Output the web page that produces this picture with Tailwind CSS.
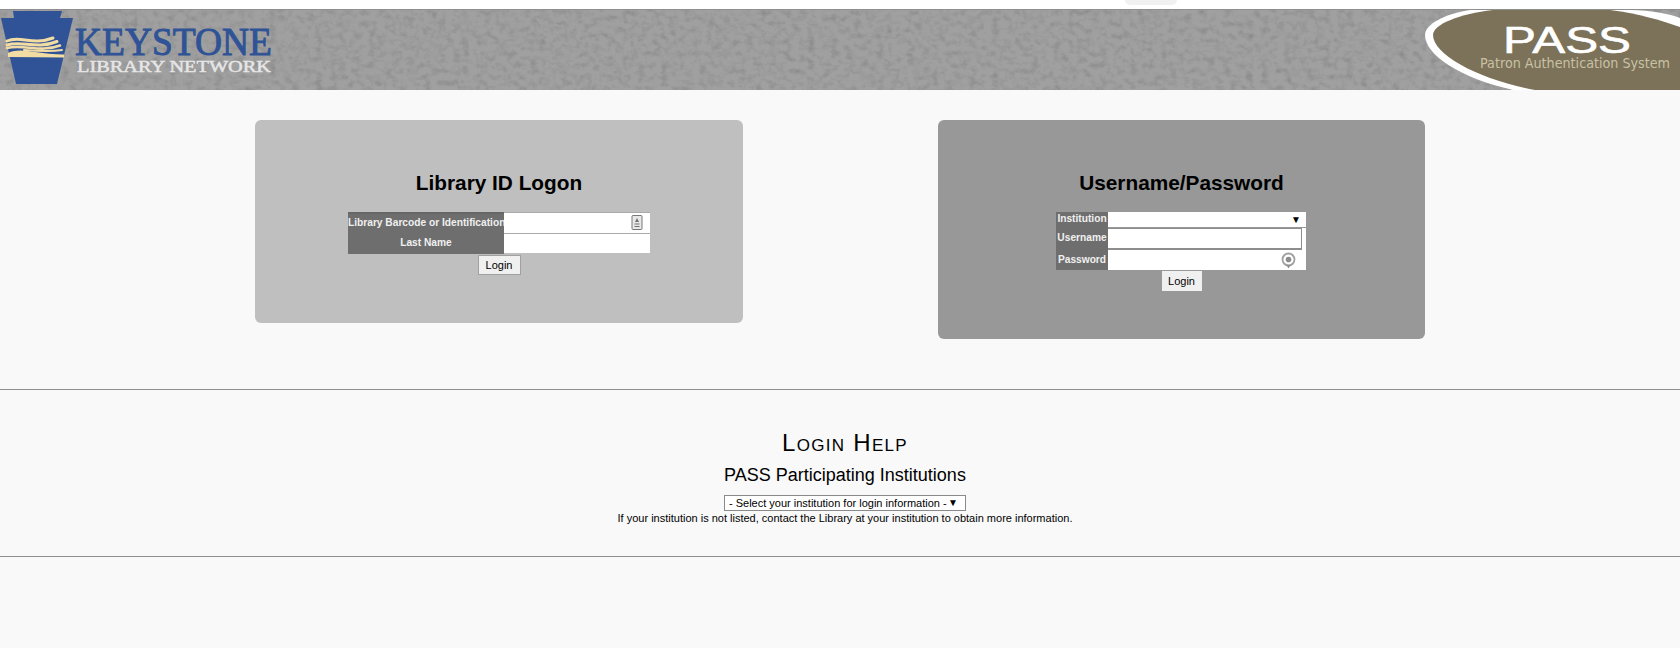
<!DOCTYPE html>
<html lang="en">
<head>
<meta charset="utf-8">
<title>PASS Login</title>
<script src="https://cdn.jsdelivr.net/npm/@tailwindcss/browser@4"></script>
</head>
<body class="bg-[#f9f9f9] font-['Liberation_Sans',Arial,sans-serif] text-black h-[648px] overflow-hidden relative">
<div class="absolute left-[1125px] top-0 w-[52px] h-[5px] bg-[#f1f1f1] rounded-b-[10px]"></div>
<div class="h-[9px] bg-white"></div>
<header class="relative h-[81px] bg-[#a0a0a0] border-t border-[#8f8f8f] flex justify-between overflow-hidden">
  <svg class="absolute inset-0 w-full h-full" aria-hidden="true">
    <filter id="concrete" x="0" y="0" width="100%" height="100%">
      <feTurbulence type="fractalNoise" baseFrequency="0.13 0.17" numOctaves="5" seed="23"/>
      <feColorMatrix type="matrix" values="0 0 0 0 0  0 0 0 0 0  0 0 0 0 0  1.1 1.1 0 0 -0.98"/>
    </filter>
    <rect width="100%" height="100%" filter="url(#concrete)" opacity="0.15"/>
  </svg>
  <svg class="relative w-[290px] h-[80px] shrink-0" viewBox="0 10 290 80" aria-label="Keystone Library Network logo">
    <polygon points="13,11 62,11 60,18 73,18 57,84 16,84 1,18 14,18" fill="#2f5396"/>
    <g fill="none" stroke="#f2dca4" stroke-linecap="round">
      <path d="M7 41 C 20 35 32 46 53 38" stroke-width="3"/>
      <path d="M7 45 C 22 40 36 50 57 41.5" stroke-width="3"/>
      <path d="M7 48 C 24 44 40 53 60 45.5" stroke-width="2.6"/>
      <path d="M24 50 C 36 51 50 52 62 50" stroke-width="2"/>
    </g>
    <path d="M8 53 C 22 47 32 54 64 54.5 L 64 57.5 L 8 57 Z" fill="#f2dca4"/>
    <text x="75" y="55" font-family="Liberation Serif" font-size="40" fill="#2f5396" stroke="#2f5396" stroke-width="1" textLength="197" lengthAdjust="spacingAndGlyphs">KEYSTONE</text>
    <text x="77" y="72" font-family="Liberation Serif" font-size="17.5" fill="#e6e6e6" stroke="#e6e6e6" stroke-width="0.5" textLength="194" lengthAdjust="spacingAndGlyphs">LIBRARY NETWORK</text>
  </svg>
  <svg class="relative w-[260px] h-[80px] shrink-0" viewBox="1420 10 260 80" aria-label="PASS Patron Authentication System logo">
    <path d="M1470 10 C1445 14 1425 24 1425 35 C1425 55 1460 78 1513 90 L1680 90 L1680 18 C1670 14 1650 10 1630 10 Z" fill="#fff"/>
    <path d="M1493 10 C1460 14 1433 24 1433 35 C1433 55 1480 80 1535 90 L1680 90 L1680 27 C1660 20 1640 14 1610 10 Z" fill="#7b7259"/>
    <text x="1503" y="53" font-family="Liberation Sans" font-size="37" fill="#fff" stroke="#fff" stroke-width="0.6" textLength="128" lengthAdjust="spacingAndGlyphs">PASS</text>
    <text x="1480" y="68" font-family="DejaVu Sans" font-size="13.5" fill="#c9c1a4" textLength="190" lengthAdjust="spacingAndGlyphs">Patron Authentication System</text>
  </svg>
</header>

<main class="flex justify-center items-start gap-[195px] pt-[30px]">
  <section class="w-[488px] h-[203px] bg-[#bfbfbf] rounded-[6px] pt-[50px] flex flex-col items-center">
    <h2 class="text-[20.8px] leading-[26px] font-bold">Library ID Logon</h2>
    <div class="mt-[16px] grid grid-cols-[156px_146px] text-[10.2px] font-bold text-[#f0f0f0]">
      <label class="bg-[#6e6e6e] h-[21px] leading-[18px] text-center border-t-2 border-[#666] whitespace-nowrap">Library Barcode or Identification</label>
      <div class="relative h-[21px] bg-white border-t border-[#aaa] pr-[1px] flex">
        <input class="w-full h-[19px] bg-white outline-none" type="text" aria-label="Library Barcode or Identification">
        <svg class="absolute right-[7px] top-[2px] w-[12px] h-[15px]" viewBox="0 0 12 15" aria-hidden="true"><rect x="1" y="0.5" width="10" height="14" rx="1" fill="#e8e8e8" stroke="#777"/><path d="M6 3 L8 7 H4 Z M3.5 8.5 H8.5 V9.5 H3.5 Z M3.5 11 H8.5 V12 H3.5 Z" fill="#707070"/></svg>
      </div>
      <label class="bg-[#6e6e6e] h-[21px] leading-[19px] text-center">Last Name</label>
      <input class="h-[20px] bg-white border-t border-[#aaa] outline-none" type="text" aria-label="Last Name">
    </div>
    <button class="mt-[1px] w-[43px] h-[20px] bg-[#f0f0f0] border border-[#a0a0a0] text-[11px] leading-[18px] text-black">Login</button>
  </section>

  <section class="w-[487px] h-[219px] bg-[#989898] rounded-[6px] pt-[50px] flex flex-col items-center">
    <h2 class="text-[20.8px] leading-[26px] font-bold">Username/Password</h2>
    <div class="mt-[16px] ml-[-1px] grid grid-cols-[52px_198px] text-[10.2px] font-bold text-[#f0f0f0]">
      <label class="bg-[#6e6e6e] h-[16px] leading-[14px] text-center">Institution</label>
      <div class="relative h-[15px] bg-white">
        <select class="appearance-none w-full h-[15px] bg-white outline-none" aria-label="Institution"><option></option></select>
        <span class="absolute right-[5px] top-0 text-[10px] leading-[15px] text-black">▼</span>
      </div>
      <label class="bg-[#6e6e6e] h-[22px] leading-[20px] text-center">Username</label>
      <div class="h-[22px] bg-white pr-[4px]">
        <input class="block w-full h-[22px] bg-white border-r border-b-2 border-t border-[#8d8d8d] outline-none" type="text" aria-label="Username">
      </div>
      <label class="bg-[#6e6e6e] h-[20px] leading-[19px] text-center">Password</label>
      <div class="relative h-[20px] bg-white pr-[4px]">
        <input class="block w-full h-[20px] bg-white outline-none" type="password" aria-label="Password">
        <svg class="absolute right-[10px] top-[2px] w-[15px] h-[17px]" viewBox="0 0 15 17" aria-hidden="true"><circle cx="7.5" cy="7.5" r="6" fill="none" stroke="#a0a0a0" stroke-width="1.8"/><circle cx="7.5" cy="7.5" r="2.8" fill="#8c8c8c"/><path d="M5.5 13 H9.5 L7.5 16.5 Z" fill="#8c8c8c"/></svg>
      </div>
    </div>
    <button class="mt-[1px] w-[40px] h-[20px] bg-[#f0f0f0] text-[11px] leading-[20px] text-black">Login</button>
  </section>
</main>

<hr class="mt-[50px] border-t border-[#8e8e8e]">

<section class="h-[166px] flex flex-col items-center pt-[38px] pl-[10px]">
  <h2 class="text-[24px] leading-[30px] tracking-[1.3px] [font-variant:small-caps]">Login Help</h2>
  <h3 class="mt-[5px] text-[18px] leading-[24px]">PASS Participating Institutions</h3>
  <div class="relative mt-[8px] w-[242px] h-[16px]">
    <select class="appearance-none block w-full h-[16px] bg-white border border-[#8a8a8a] pl-[4px] pr-0 text-[11px] leading-[14px] text-black outline-none" aria-label="Select your institution"><option>- Select your institution for login information -</option></select>
    <span class="absolute right-[8px] top-0 text-[10px] leading-[15px]">▼</span>
  </div>
  <p class="text-[11px] leading-[14px] whitespace-nowrap">If your institution is not listed, contact the Library at your institution to obtain more information.</p>
</section>
<hr class="border-t border-[#8e8e8e]">
</body>
</html>
